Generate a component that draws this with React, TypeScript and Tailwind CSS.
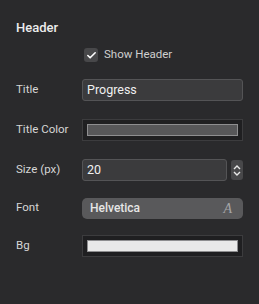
import { Check } from 'lucide-react';

const Label = ({ children }: { children: React.ReactNode }) => (
  <div className="w-[66px] shrink-0 text-[11.5px] text-[#d6d6d6]">{children}</div>
);

const ColorWell = ({ color }: { color: string }) => (
  <div className="w-[161px] h-[22px] bg-[#1f1f21] border border-[#3c3c3e] p-[4px]">
    <div className="w-full h-full border border-[#8e8e90]" style={{ backgroundColor: color }} />
  </div>
);

const App = () => {
  return (
    <div
      className="w-[259px] h-[304px] bg-[#2a2a2c] text-white pl-[16px] overflow-hidden"
      style={{ fontFamily: 'Roboto, "Liberation Sans", sans-serif' }}
    >
      <div className="pt-[18px] h-[36px] text-[13px] font-medium text-[#ececec]">Header</div>

      <div className="flex items-center h-[38px] pl-[68px]">
        <div className="w-[14px] h-[14px] rounded-[3px] bg-[#48484a] flex items-center justify-center">
          <Check size={11} strokeWidth={3.5} className="text-white" />
        </div>
        <span className="ml-[6px] text-[11.5px] text-[#cfcfcf]">Show Header</span>
      </div>

      <div className="flex flex-col mt-[5px]">
        <div className="flex items-center h-[22px]">
          <Label>Title</Label>
          <div className="w-[161px] h-[22px] bg-[#3b3b3d] border border-[#545456] rounded-[3px] flex items-center px-[4px] text-[12.5px] text-[#f0f0f0]">
            Progress
          </div>
        </div>

        <div className="flex items-center h-[22px] mt-[18px]">
          <Label>Title Color</Label>
          <ColorWell color="#575759" />
        </div>

        <div className="flex items-center h-[22px] mt-[18px]">
          <Label>Size (px)</Label>
          <div className="w-[145px] h-[22px] bg-[#3b3b3d] border border-[#545456] rounded-[3px] flex items-center px-[4px] text-[12.5px] text-[#f0f0f0]">
            20
          </div>
          <div className="ml-[4px] w-[12px] h-[20px] rounded-[3px] bg-[#48484a] flex flex-col items-center justify-center gap-[1px]">
            <svg width="8" height="5" viewBox="0 0 8 5" fill="none">
              <path d="M1 4 L4 1 L7 4" stroke="#e8e8e8" strokeWidth="1.4" />
            </svg>
            <svg width="8" height="5" viewBox="0 0 8 5" fill="none">
              <path d="M1 1 L4 4 L7 1" stroke="#e8e8e8" strokeWidth="1.4" />
            </svg>
          </div>
        </div>

        <div className="flex items-center h-[22px] mt-[16px]">
          <Label>Font</Label>
          <div className="w-[161px] h-[21px] bg-[#59595b] rounded-[5px] flex items-center justify-between pl-[8px] pr-[11px] text-[12px] font-medium text-[#e6e6e6]">
            <span>Helvetica</span>
            <span
              className="italic text-[14px] text-[#a5a5a7]"
              style={{ fontFamily: '"Liberation Serif", serif' }}
            >
              A
            </span>
          </div>
        </div>

        <div className="flex items-center h-[22px] mt-[16px]">
          <Label>Bg</Label>
          <ColorWell color="#e9e9e9" />
        </div>
      </div>
    </div>
  );
};

export default App;
